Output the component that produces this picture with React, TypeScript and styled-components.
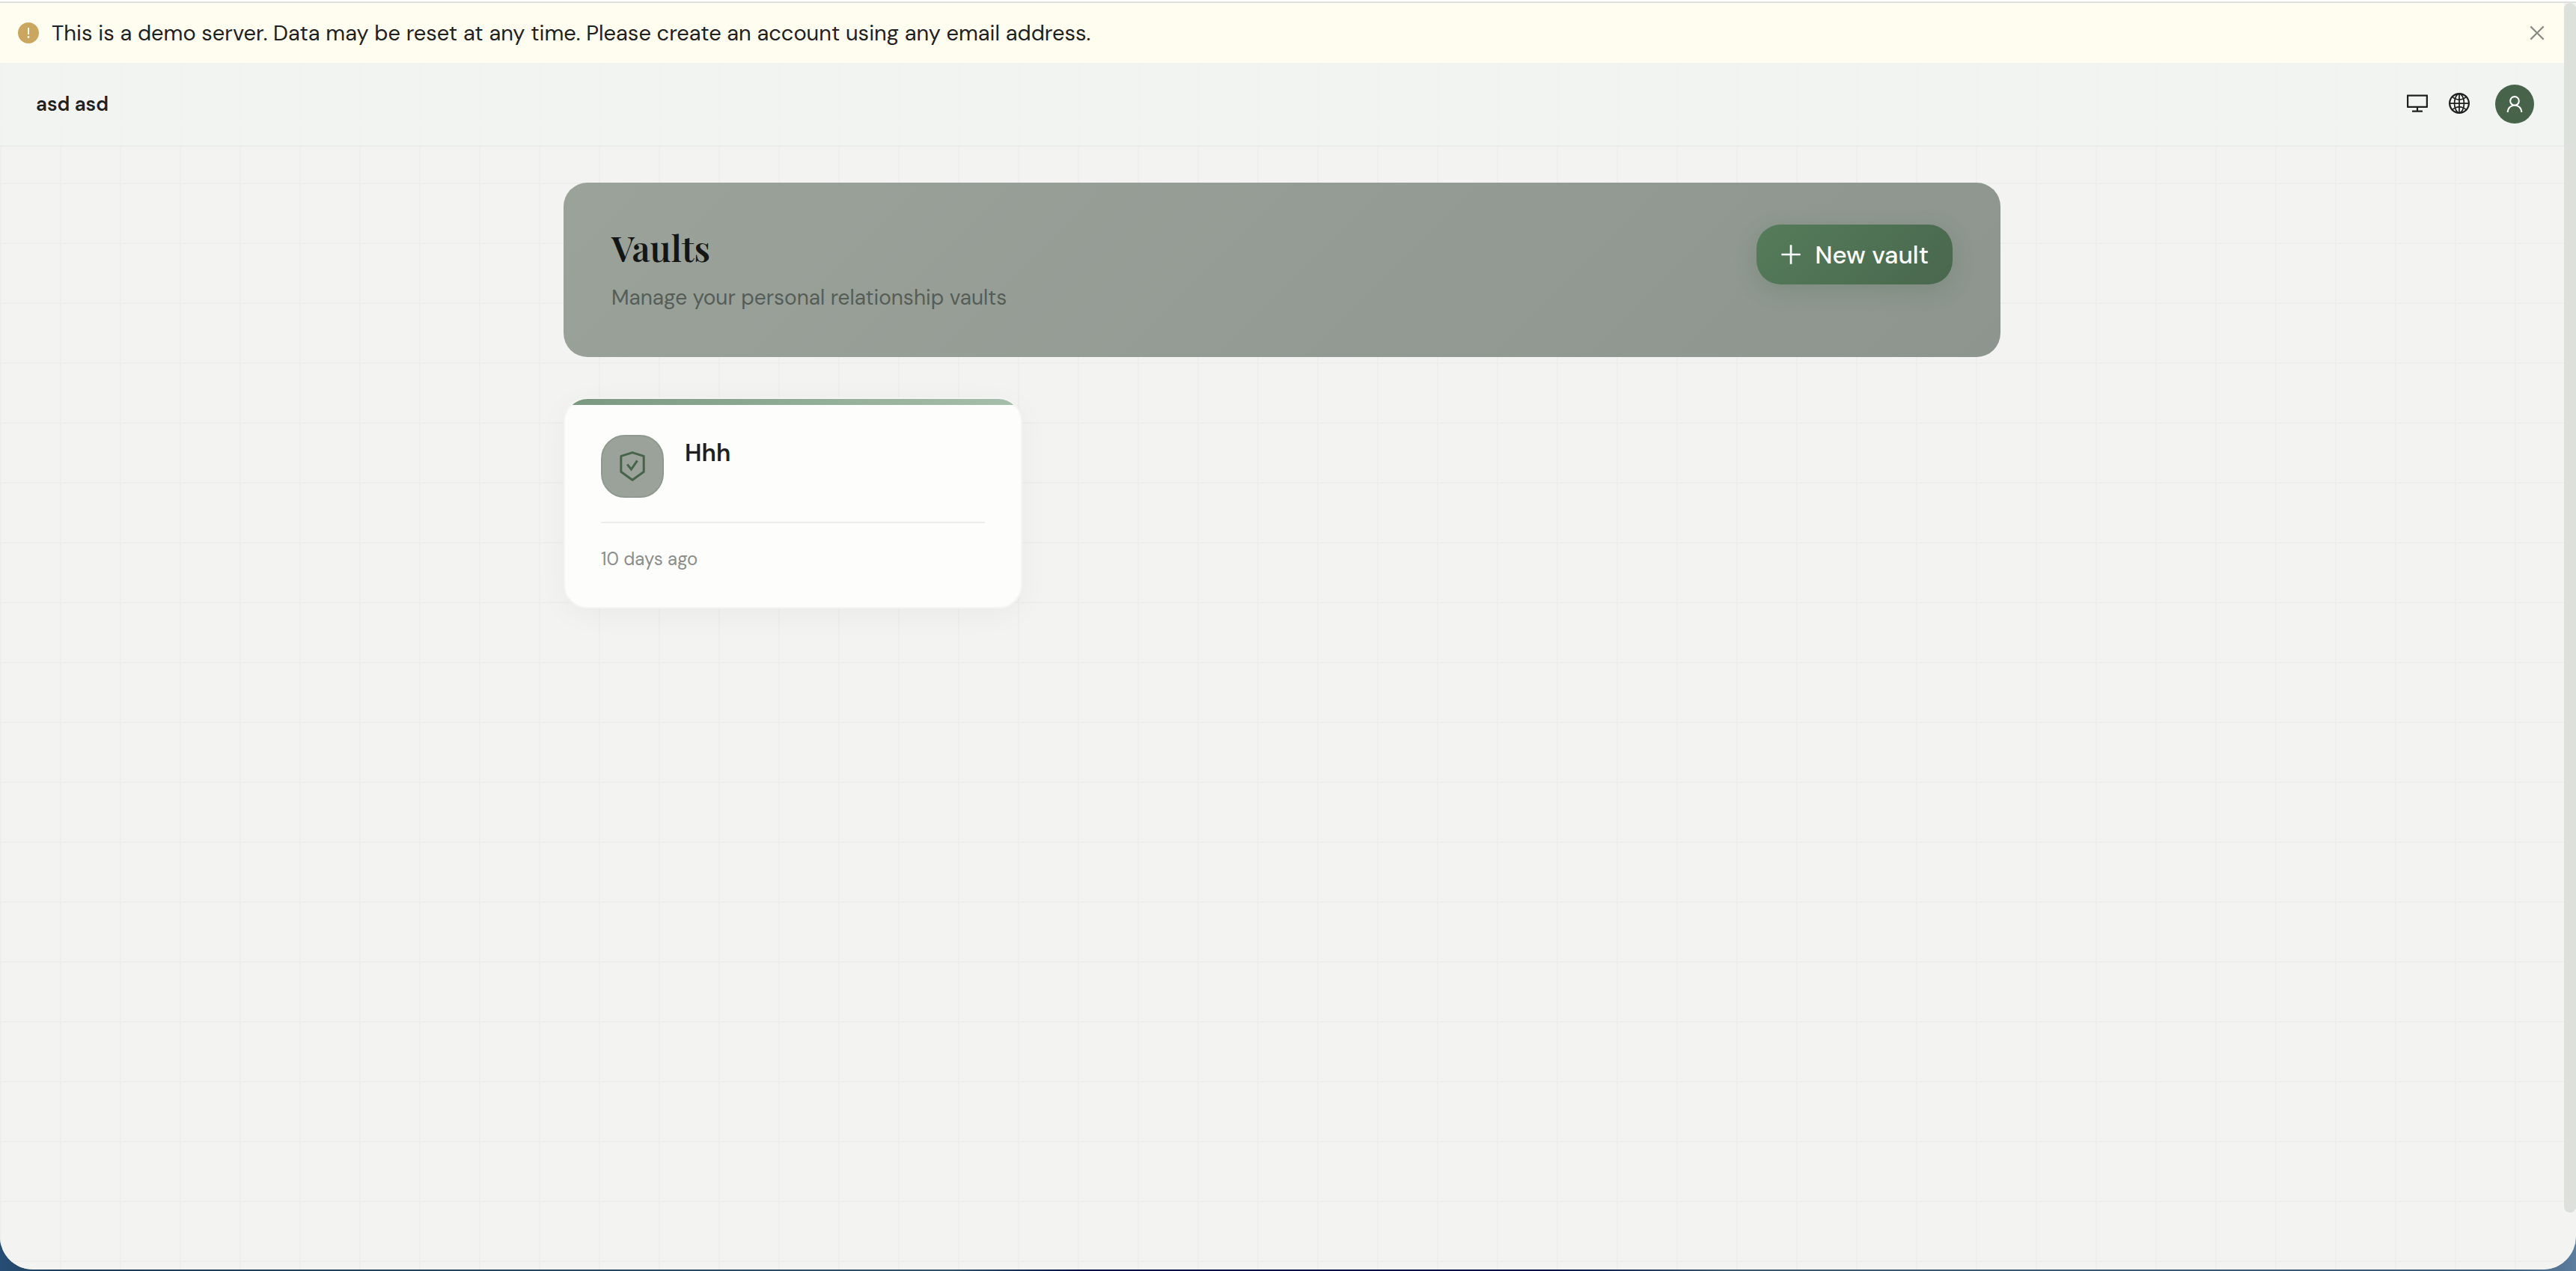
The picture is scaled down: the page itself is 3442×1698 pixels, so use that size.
import React, { useState } from "react";
import styled, { createGlobalStyle } from "styled-components";
import {
  AiFillExclamationCircle,
  AiOutlineClose,
  AiOutlineDesktop,
  AiOutlineGlobal,
  AiOutlinePlus,
  AiOutlineUser,
} from "react-icons/ai";

const GlobalStyle = createGlobalStyle`
  *, *::before, *::after { box-sizing: border-box; }
  body {
    margin: 0;
    font-family: "DM Sans", Inter, "Liberation Sans", sans-serif;
    color: #1f2120;
  }
  button { font: inherit; color: inherit; border: 0; padding: 0; background: none; cursor: pointer; }
  a { color: inherit; text-decoration: none; }
  svg { display: block; flex: none; }
`;

/* Wallpaper that shows behind the rounded window corners */
const Desktop = styled.div`
  min-height: 100vh;
  display: flex;
  padding-bottom: 2px;
  background: linear-gradient(
    90deg,
    #264d74 0%,
    #1b3a55 3%,
    #2f5068 37%,
    #000f45 42%,
    #000f45 60%,
    #3a566c 67%,
    #3a5a78 97%,
    #5c7d9e 100%
  );
`;

const Window = styled.div`
  flex: 1;
  display: flex;
  min-width: 0;
  overflow: hidden;
  border-top: 2px solid #ffffff;
  border-radius: 0 0 44px 44px;
  background: #f3f4f1;
`;

const Viewport = styled.div`
  flex: 1;
  display: flex;
  min-width: 0;
  border-top: 2px solid #dce1dd;
`;

const Page = styled.div`
  flex: 1;
  min-width: 0;
  background-color: #f3f3f1;
  background-image: linear-gradient(#eeefec 2px, transparent 2px),
    linear-gradient(90deg, #eeefec 2px, transparent 2px);
  background-size: 80px 80px;
`;

const ScrollTrack = styled.div`
  width: 16px;
  display: flex;
  padding-bottom: 76px;
`;

const ScrollThumb = styled.div`
  flex: 1;
  border-radius: 8px;
  background: #dce1dc;
`;

const Banner = styled.div`
  display: flex;
  align-items: center;
  gap: 15px;
  height: 80px;
  padding: 0 22px;
  background: #fffcf0;
  font-size: 29px;
  line-height: 44px;
`;

const BannerText = styled.span`
  flex: 1;
`;

const WarningIcon = styled(AiFillExclamationCircle)`
  color: #cba660;
`;

const CloseButton = styled.button`
  color: #8c8c86;
`;

const Header = styled.header`
  display: flex;
  align-items: center;
  justify-content: space-between;
  height: 112px;
  padding: 0 40px 0 48px;
  border-bottom: 2px solid #eaebeb;
  background: rgba(242, 244, 241, 0.75);
`;

const AccountName = styled.a`
  font-size: 26px;
  font-weight: 600;
  line-height: 40px;
`;

const Actions = styled.div`
  display: flex;
  align-items: center;
`;

const IconButton = styled.button`
  padding: 12px 12px 14px;
`;

const Avatar = styled.button`
  display: grid;
  place-items: center;
  width: 52px;
  height: 52px;
  margin-left: 20px;
  border-radius: 50%;
  background: #47644b;
  color: #ffffff;
`;

const Main = styled.main`
  max-width: 1920px;
  margin: 0 auto;
  padding: 48px 0;
`;

const Hero = styled.section`
  display: flex;
  align-items: flex-start;
  justify-content: space-between;
  padding: 56px 64px;
  margin-bottom: 54px;
  border-radius: 32px;
  background: linear-gradient(135deg, #9aa29a 0%, #8d958e 100%);
`;

const Title = styled.h1`
  margin: 0 0 12px;
  font-family: "Playfair Display", "Liberation Serif", serif;
  font-size: 47px;
  font-weight: 600;
  line-height: 62px;
  color: #141615;
`;

const Subtitle = styled.p`
  margin: 0;
  font-size: 28px;
  line-height: 47px;
  color: #565d57;
`;

const PrimaryButton = styled.button`
  display: flex;
  align-items: center;
  gap: 14px;
  height: 80px;
  padding: 0 32px 0 28px;
  border-radius: 32px;
  background: linear-gradient(135deg, #557c5b 0%, #49674d 100%);
  box-shadow: 0 8px 28px rgba(74, 110, 80, 0.25);
  color: #ffffff;
  font-size: 33px;
  font-weight: 500;
`;

const VaultGrid = styled.div`
  display: grid;
  grid-template-columns: repeat(auto-fill, minmax(560px, 1fr));
  gap: 40px;
`;

const VaultCard = styled.a`
  position: relative;
  display: block;
  overflow: hidden;
  padding: 48px;
  border: 2px solid #f4f5f3;
  border-radius: 32px;
  background: #fdfdfc;
  box-shadow: 0 8px 40px rgba(30, 40, 32, 0.04);

  &::before {
    content: "";
    position: absolute;
    inset: 0 0 auto;
    height: 8px;
    background: linear-gradient(90deg, #7a977f, #a6bfac);
  }
`;

const VaultHead = styled.div`
  display: flex;
  gap: 28px;
  padding-bottom: 32px;
  border-bottom: 2px solid #ededee;
`;

const VaultBadge = styled.div`
  display: grid;
  place-items: center;
  width: 84px;
  height: 84px;
  border: 2px solid #909990;
  border-radius: 32px;
  background: #9aa29a;
  color: #47644b;
`;

const VaultName = styled.h2`
  margin: 0;
  font-size: 32px;
  font-weight: 600;
  line-height: 48px;
`;

const VaultDate = styled.div`
  padding-top: 32px;
  font-size: 24px;
  line-height: 32px;
  color: #8b8d8b;
`;

function ShieldIcon() {
  return (
    <svg width="34" height="40" viewBox="0 0 34 40" fill="none" stroke="currentColor" strokeWidth="3" aria-hidden="true">
      <path d="M17 1.6 32.2 6.4V27.2L17 38.2 1.8 27.2V6.4Z" strokeLinejoin="round" />
      <path d="M10.2 17.4 15.4 24 23.6 12.4" />
    </svg>
  );
}

const vaults = [{ name: "Hhh", updated: "10 days ago" }];

export default function App() {
  const [bannerOpen, setBannerOpen] = useState(true);

  return (
    <Desktop>
      <GlobalStyle />
      <Window>
        <Viewport>
          <Page>
            {bannerOpen && (
              <Banner role="alert">
                <WarningIcon size={32} />
                <BannerText>
                  This is a demo server. Data may be reset at any time. Please create an account using any email address.
                </BannerText>
                <CloseButton aria-label="Close" onClick={() => setBannerOpen(false)}>
                  <AiOutlineClose size={28} />
                </CloseButton>
              </Banner>
            )}
            <Header>
              <AccountName href="#">asd asd</AccountName>
              <Actions>
                <IconButton aria-label="Theme">
                  <AiOutlineDesktop size={32} />
                </IconButton>
                <IconButton aria-label="Language">
                  <AiOutlineGlobal size={32} />
                </IconButton>
                <Avatar aria-label="Account">
                  <AiOutlineUser size={28} />
                </Avatar>
              </Actions>
            </Header>
            <Main>
              <Hero>
                <div>
                  <Title>Vaults</Title>
                  <Subtitle>Manage your personal relationship vaults</Subtitle>
                </div>
                <PrimaryButton>
                  <AiOutlinePlus size={36} />
                  New vault
                </PrimaryButton>
              </Hero>
              <VaultGrid>
                {vaults.map((vault) => (
                  <VaultCard key={vault.name} href="#">
                    <VaultHead>
                      <VaultBadge>
                        <ShieldIcon />
                      </VaultBadge>
                      <VaultName>{vault.name}</VaultName>
                    </VaultHead>
                    <VaultDate>{vault.updated}</VaultDate>
                  </VaultCard>
                ))}
              </VaultGrid>
            </Main>
          </Page>
          <ScrollTrack>
            <ScrollThumb />
          </ScrollTrack>
        </Viewport>
      </Window>
    </Desktop>
  );
}
